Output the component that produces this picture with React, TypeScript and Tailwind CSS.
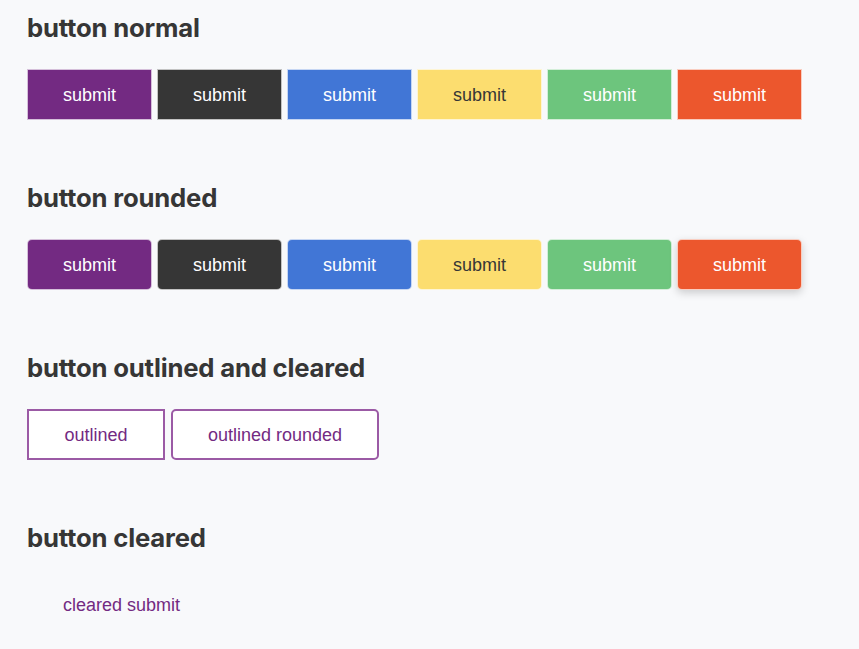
const colors = [
  "bg-[#732a82] text-white",
  "bg-[#363636] text-white",
  "bg-[#4176d6] text-white",
  "bg-[#fcdd6f] text-[#363636]",
  "bg-[#6dc57d] text-white",
  "bg-[#ec572d] text-white",
];

const Heading = ({ children }: { children: string }) => (
  <h2 className="font-['Inter',sans-serif] text-[25.7px] leading-[32px] font-bold text-[#363636] tracking-[-0.2px]">
    {children}
  </h2>
);

const btn =
  "h-[51px] w-[125px] border border-white/70 pt-[2px] text-[18px] flex items-center justify-center";

export default function App() {
  return (
    <div className="min-h-[649px] bg-[#f8f9fb] px-[27px] pt-[12px] font-['Liberation_Sans',Arial,sans-serif]">
      <section>
        <Heading>button normal</Heading>
        <div className="mt-[25px] flex gap-[5px]">
          {colors.map((c, i) => (
            <button key={i} className={`${btn} ${c}`}>
              submit
            </button>
          ))}
        </div>
      </section>

      <section className="mt-[62px]">
        <Heading>button rounded</Heading>
        <div className="mt-[25px] flex gap-[5px]">
          {colors.map((c, i) => (
            <button
              key={i}
              className={`${btn} ${c} rounded-[5px] ${i === 5 ? "shadow-[0_3px_8px_rgba(0,0,0,0.18)]" : ""}`}
            >
              submit
            </button>
          ))}
        </div>
      </section>

      <section className="mt-[62px]">
        <Heading>button outlined and cleared</Heading>
        <div className="mt-[25px] flex gap-[6px]">
          <button className="h-[51px] w-[138px] border-2 border-[#9b5aa5] bg-white pt-[2px] text-[18px] text-[#732a82]">
            outlined
          </button>
          <button className="h-[51px] w-[208px] rounded-[5px] border-2 border-[#9b5aa5] bg-white pt-[2px] text-[18px] text-[#732a82]">
            outlined rounded
          </button>
        </div>
      </section>

      <section className="mt-[62px]">
        <Heading>button cleared</Heading>
        <div className="mt-[25px] flex">
          <button className="h-[51px] px-[36px] pt-[2px] text-[18px] text-[#732a82]">cleared submit</button>
        </div>
      </section>
    </div>
  );
}
